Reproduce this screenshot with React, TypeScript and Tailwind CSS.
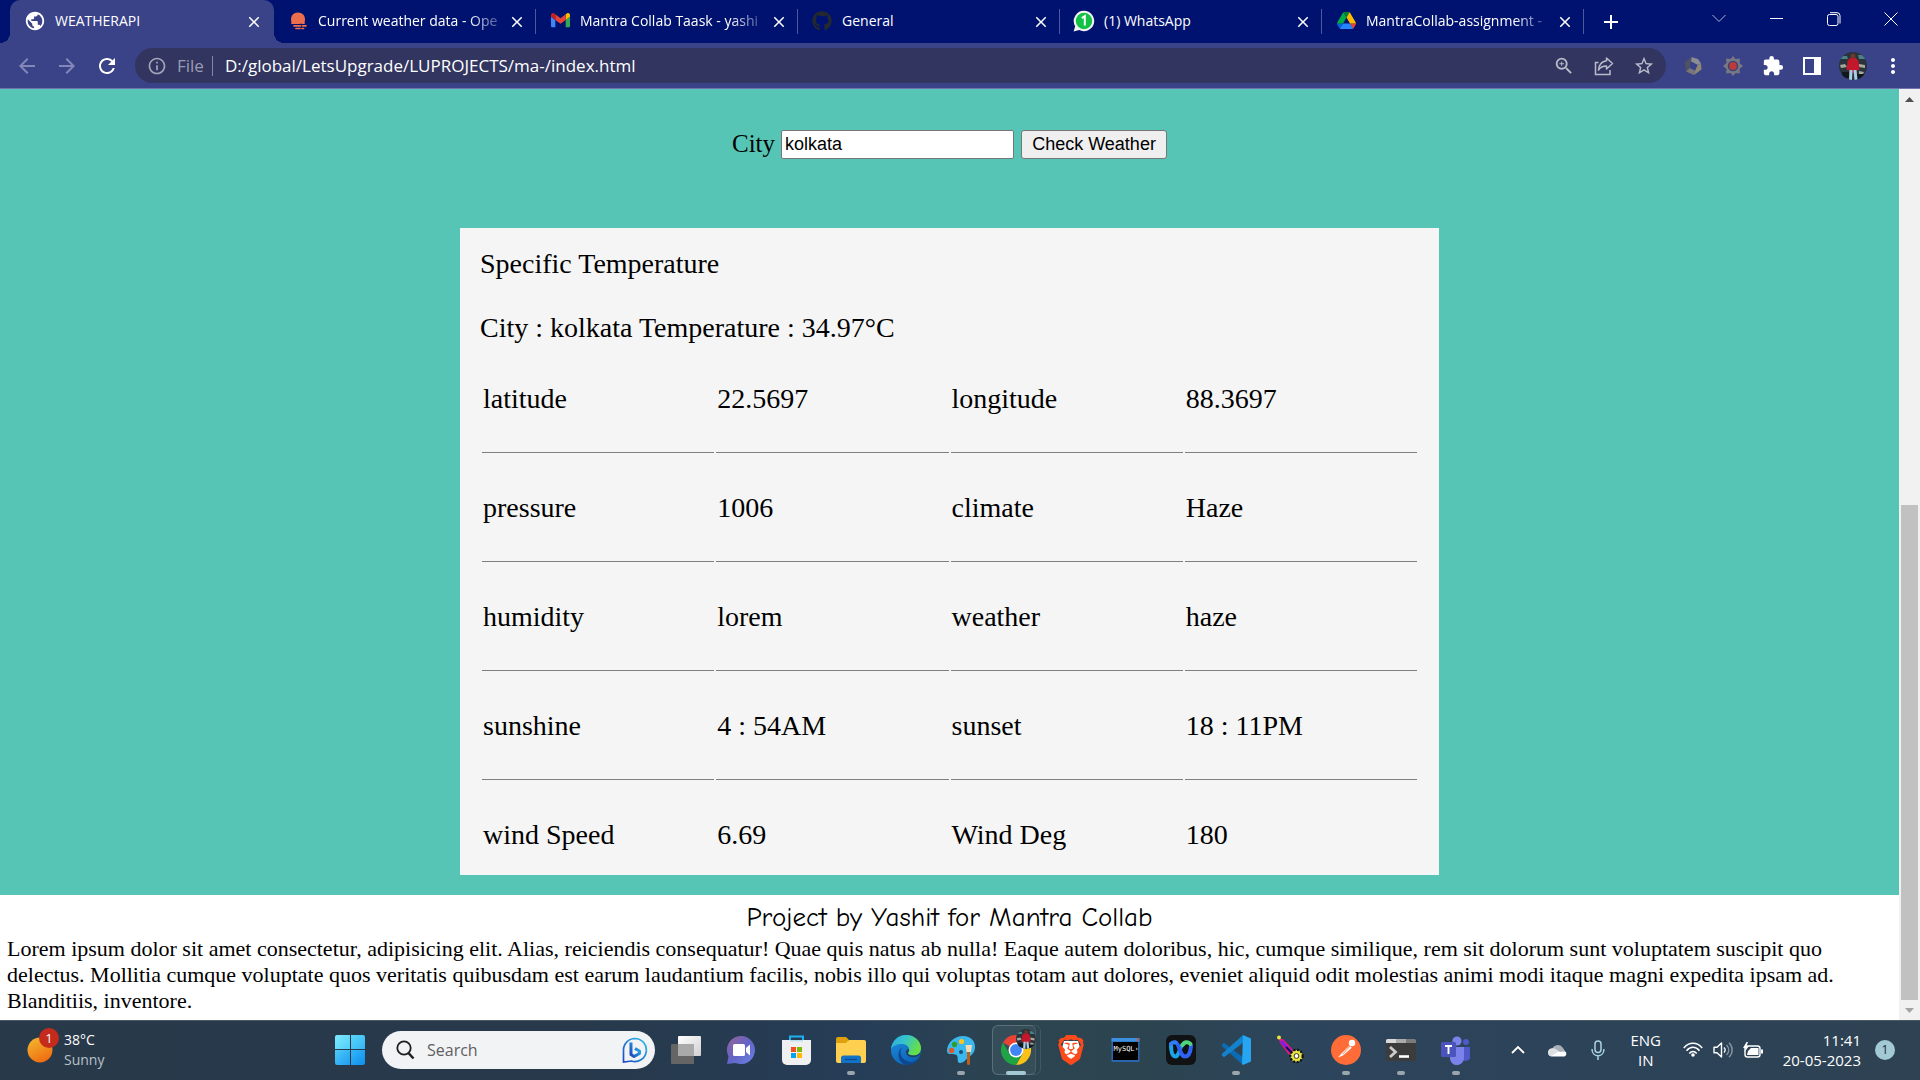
import React, { useState } from "react";
import {
  MdArrowBack,
  MdArrowForward,
  MdRefresh,
  MdInfoOutline,
  MdPublic,
  MdZoomIn,
  MdStarBorder,
  MdExtension,
  MdMoreVert,
  MdClose,
  MdAdd,
} from "react-icons/md";
import { FaGithub } from "react-icons/fa";
import { SiBrave } from "react-icons/si";

/* ---------- tab icons ---------- */

const OpenWeatherIcon = () => (
  <svg viewBox="0 0 20 20" className="size-5">
    <path
      d="M10 1.500c4.400 0 7 3.200 7 7 0 1.600-.3 2.600-.8 3.600H3.800C3.300 11.100 3 10 3 8.500c0-3.800 2.600-7 7-7z"
      fill="#ec6e4c"
    />
    <path d="M4 12.200h8M14 12.200h2M6 14.800h6.500M14.500 14.800h3.500M8 17.500h4M14 17.500h1.500" stroke="#ec6e4c" strokeWidth="1.700" strokeLinecap="round" />
  </svg>
);

const GmailIcon = () => (
  <svg viewBox="52 42 88 66" className="w-[19px]">
    <path fill="#4285f4" d="M58 108h14V74L52 59v43c0 3.32 2.69 6 6 6" />
    <path fill="#34a853" d="M120 108h14c3.32 0 6-2.69 6-6V59l-20 15" />
    <path fill="#fbbc04" d="M120 48v26l20-15v-8c0-7.42-8.47-11.65-14.4-7.2" />
    <path fill="#ea4335" d="M72 74V48l24 18 24-18v26L96 92" />
    <path fill="#c5221f" d="M52 51v8l20 15V48l-5.6-4.2c-5.94-4.45-14.4-.22-14.4 7.2" />
  </svg>
);

const WhatsAppIcon = () => (
  <svg viewBox="0 0 22 22" className="size-[22px]">
    <path d="M11 .800a10.200 10.200 0 1 1-4.800 19.200L.600 21.400 2.200 16.200A10.200 10.200 0 0 1 11 .800z" fill="#f4f4f4" />
    <circle cx="11" cy="11" r="8.200" fill="#12c245" />
    <path d="M8.800 8.200 11.800 6.200v9.400" fill="none" stroke="#fff" strokeWidth="2" />
  </svg>
);

const DriveIcon = () => (
  <svg viewBox="0 0 87.3 78" className="w-[19px]">
    <path fill="#0066da" d="m6.6 66.85 3.85 6.65c.8 1.4 1.95 2.5 3.3 3.3l13.75-23.8h-27.5c0 1.55.4 3.1 1.2 4.5z" />
    <path fill="#00ac47" d="m43.65 25-13.75-23.8c-1.35.8-2.5 1.9-3.3 3.3l-25.4 44a9.06 9.06 0 0 0 -1.2 4.5h27.5z" />
    <path fill="#ea4335" d="m73.55 76.8c1.35-.8 2.5-1.9 3.3-3.3l1.6-2.75 7.65-13.25c.8-1.4 1.2-2.95 1.2-4.5h-27.502l5.852 11.5z" />
    <path fill="#00832d" d="m43.65 25 13.75-23.8c-1.35-.8-2.9-1.2-4.5-1.2h-18.5c-1.6 0-3.15.45-4.5 1.2z" />
    <path fill="#2684fc" d="m59.8 53h-32.3l-13.75 23.8c1.35.8 2.9 1.2 4.5 1.2h50.8c1.6 0 3.15-.45 4.5-1.2z" />
    <path fill="#ffba00" d="m73.4 26.5-12.7-22c-.8-1.4-1.95-2.5-3.3-3.3l-13.75 23.8 16.15 28h27.45c0-1.55-.4-3.1-1.2-4.5z" />
  </svg>
);

const tabs = [
  { title: "WEATHERAPI", icon: <MdPublic className="size-[22px] text-white" /> },
  { title: "Current weather data - Ope", icon: <OpenWeatherIcon />, fade: true },
  { title: "Mantra Collab Taask - yashi", icon: <GmailIcon />, fade: true },
  { title: "General", icon: <FaGithub className="size-5 text-[#24292f]" /> },
  { title: "(1) WhatsApp", icon: <WhatsAppIcon /> },
  { title: "MantraCollab-assignment -", icon: <DriveIcon />, fade: true },
];

function TabStrip() {
  return (
    <div className="flex h-[43px] bg-[#00126f] pl-[10px] text-white">
      <div role="tablist" className="flex min-w-0">
        {tabs.map((tab, i) => (
          <div
            key={tab.title}
            className={
              i === 0
                ? "relative flex w-[264px] items-center rounded-t-[10px] bg-[#3a4288] pl-[14px] pr-[11px]"
                : "relative flex w-[262px] items-center pl-[13px] pr-[10px]"
            }
          >
            {i === 0 && (
              <>
                <span className="absolute bottom-0 -left-[10px] size-[10px] bg-[radial-gradient(circle_at_0_0,#00126f_10px,#3a4288_10px)]" />
                <span className="absolute bottom-0 -right-[10px] size-[10px] bg-[radial-gradient(circle_at_100%_0,#00126f_10px,#3a4288_10px)]" />
              </>
            )}
            <button role="tab" aria-selected={i === 0} className="flex min-w-0 flex-1 items-center gap-[9px] pb-[2px] text-left">
              <span className="flex w-[22px] shrink-0 justify-center">{tab.icon}</span>
              <span
                className={
                  tab.fade
                    ? "whitespace-nowrap text-[14px] leading-5 [mask-image:linear-gradient(to_right,#000_84%,rgb(0_0_0/0.3))]"
                    : "whitespace-nowrap text-[14px] leading-5"
                }
              >
                {tab.title}
              </span>
            </button>
            <button aria-label="Close tab" className="flex w-[18px] justify-center">
              <MdClose className="size-[18px]" />
            </button>
            {i > 0 && <span className="absolute right-0 top-[9px] h-[25px] w-px bg-[#4d5999]" />}
          </div>
        ))}
      </div>
      <button aria-label="New tab" className="ml-[15px] flex items-center">
        <MdAdd className="size-6" />
      </button>
      <div className="ml-auto flex h-[37px]">
        <button aria-label="Search tabs" className="flex w-[57px] items-center justify-center">
          <svg viewBox="0 0 14 9" className="w-[14px]" fill="none" stroke="#aab0d4">
            <path d="m.5 1 6.500 6.500L13.500 1" />
          </svg>
        </button>
        <button aria-label="Minimize" className="flex w-[58px] items-center justify-center">
          <span className="h-px w-[13px] bg-white" />
        </button>
        <button aria-label="Restore" className="flex w-[57px] items-center justify-center">
          <svg viewBox="0 0 14 14" className="size-[14px]" fill="none" stroke="#fff">
            <rect x=".5" y="2.500" width="10.500" height="11" rx="2" />
            <path d="M3 .7h7a3 3 0 0 1 3 3v7.800" />
          </svg>
        </button>
        <button aria-label="Close" className="flex w-[58px] items-center justify-center">
          <svg viewBox="0 0 14 14" className="size-[14px]" fill="none" stroke="#fff">
            <path d="m.5.5 13 13M13.500.5l-13 13" />
          </svg>
        </button>
      </div>
    </div>
  );
}

const Avatar = ({ className }: { className: string }) => (
  <svg viewBox="0 0 28 28" className={className}>
    <defs>
      <clipPath id="avatar-clip">
        <circle cx="14" cy="14" r="14" />
      </clipPath>
    </defs>
    <g clipPath="url(#avatar-clip)">
      <rect width="28" height="28" fill="#28343a" />
      <path d="M0 4h8l1 3H0zM19 3h9v4h-8z" fill="#4d8186" />
      <path d="m1 13 5-1 2 3-6 1zM20 12l6 1v3l-6-1zM20 19l5 1-1 2h-4z" fill="#a9a79b" />
      <path d="M3 20h7v6H3zM18 22h7v5h-7z" fill="#11181c" />
      <path d="M11 6h6l2.500 3 1 9h-3v3h-7v-3h-3l1-9z" fill="#c3182b" />
      <circle cx="14" cy="4" r="2.500" fill="#6b3a2c" />
      <path d="M10.500 18h3L13 28h-3zM14.500 18h3l1 10h-3z" fill="#a8cfe8" />
    </g>
  </svg>
);

function Toolbar() {
  return (
    <div className="flex h-[46px] items-center border-b border-[#6f74ad] bg-[#3a4288] px-[15px] text-white">
      <div className="flex items-center gap-4 text-[#8388b8]">
        <button aria-label="Back">
          <MdArrowBack className="size-6" />
        </button>
        <button aria-label="Forward">
          <MdArrowForward className="size-6" />
        </button>
        <button aria-label="Reload" className="text-white">
          <MdRefresh className="size-6" />
        </button>
      </div>
      <div className="ml-4 flex h-[35px] min-w-0 flex-1 items-center rounded-full bg-[#31355f] pl-3 pr-[11px]">
        <MdInfoOutline className="size-5 shrink-0 text-[#a5a7b8]" />
        <span className="ml-[10px] text-[17px] leading-6 text-[#9a9cb0]">File</span>
        <span className="ml-2 h-5 w-px bg-[#85889f]" />
        <input
          aria-label="Address"
          defaultValue="D:/global/LetsUpgrade/LUPROJECTS/ma-/index.html"
          className="ml-3 h-6 min-w-0 flex-1 bg-transparent text-[17px] leading-6 text-white outline-none"
        />
        <div className="flex items-center gap-[19px] text-[#b9bbc9]">
          <button aria-label="Zoom">
            <MdZoomIn className="size-[22px]" />
          </button>
          <button aria-label="Share">
            <svg viewBox="0 0 20 20" className="size-5" fill="none" stroke="currentColor" strokeWidth="1.500">
              <path d="M4.500 6.500h-3V18.500h14.500V14" />
              <path d="M12.500 2 18.500 7.500l-6 5.500V10c-4 0-6.500 1.500-8 4 .3-4.500 3-8.500 8-9.300z" strokeLinejoin="round" />
            </svg>
          </button>
          <button aria-label="Bookmark">
            <MdStarBorder className="size-[22px]" />
          </button>
        </div>
      </div>
      <div className="ml-4 flex items-center">
        <button aria-label="Extension" className="flex w-10 pl-px">
          <svg viewBox="0 0 20 20" className="size-5">
            <path d="M8.500 1 15 3l3 4.500-3.500 1.500L8 5.500z" fill="#8b8d94" />
            <path d="m18 7.500.500 6L11 19l1-4.500 2.500-5.500z" fill="#8d8876" />
            <path d="m11 19-8-3.500L2 6l6.500-5L7 12z" fill="#50535f" />
            <path d="m7 12 5 2.500L11 19l-8-3.500z" fill="#77777b" />
            <path d="m8 5.500 6.500 3.500L12 14.500 7 12z" fill="#3a4288" />
          </svg>
        </button>
        <button aria-label="Extension" className="flex w-10 pl-px">
          <svg viewBox="0 0 20 20" className="size-5">
            <path d="m10 0 2.500 3 4.500-.500-.500 4.500L20 10l-3.500 3 .500 4.500-4.500-.500L10 20l-2.500-3-4.500.500.500-4.500L0 10l3.500-3L3 2.500l4.500.500z" fill="#777883" />
            <circle cx="10" cy="10" r="5.200" fill="#344079" />
            <circle cx="10" cy="10" r="3.900" fill="#bb3a3a" />
          </svg>
        </button>
        <button aria-label="Extensions" className="flex w-[41px]">
          <MdExtension className="size-[22px]" />
        </button>
        <button aria-label="Side panel" className="flex w-9">
          <span className="flex h-[18px] w-[18px] border-2 border-r-[7px] border-white" />
        </button>
        <button aria-label="Profile">
          <Avatar className="size-7" />
        </button>
        <button aria-label="Menu" className="ml-[14px]">
          <MdMoreVert className="size-6" />
        </button>
      </div>
    </div>
  );
}

/* ---------- page ---------- */

const rows = [
  ["latitude", "22.5697", "longitude", "88.3697"],
  ["pressure", "1006", "climate", "Haze"],
  ["humidity", "lorem", "weather", "haze"],
  ["sunshine", "4 : 54AM", "sunset", "18 : 11PM"],
  ["wind Speed", "6.69", "Wind Deg", "180"],
];

function WeatherPage() {
  const [city, setCity] = useState("kolkata");
  return (
    <main className="min-w-0 flex-1 bg-white font-['Liberation_Serif',serif] text-black">
      <section className="bg-[#56c5b5] pb-5 pt-[39px]">
        <form onSubmit={(e) => e.preventDefault()} className="flex h-8 items-center justify-center">
          <label htmlFor="city" className="pb-px text-[25px] leading-8">
            City
          </label>
          <input
            id="city"
            value={city}
            onChange={(e) => setCity(e.target.value)}
            className="ml-[6px] h-[29px] w-[233px] rounded-[2px] border border-[#767676] bg-white px-[3px] font-['Liberation_Sans',sans-serif] text-[18px]"
          />
          <button className="ml-[7px] h-[29px] w-[146px] rounded-[3px] border border-[#767676] bg-[#efefef] font-['Liberation_Sans',sans-serif] text-[18px] leading-5">
            Check Weather
          </button>
        </form>
        <div className="mx-auto mt-[68px] w-full max-w-[979px] bg-[#f5f5f5] px-5 pb-[22px] pt-5 text-[28px] leading-8">
          <h1>Specific Temperature</h1>
          <p className="mt-8">City : kolkata Temperature : 34.97°C</p>
          <table className="w-full table-fixed border-separate border-spacing-[2px]">
            <tbody>
              {rows.map((row, i) => (
                <tr key={row[0]}>
                  {row.map((cell) => (
                    <td
                      key={cell}
                      className={
                        i < rows.length - 1 ? "border-b border-[#808080] px-px py-[37px]" : "px-px pt-[37px]"
                      }
                    >
                      {cell}
                    </td>
                  ))}
                </tr>
              ))}
            </tbody>
          </table>
        </div>
      </section>
      <footer className="px-[7px] pb-[5px] pt-[5px]">
        <p className="text-center font-['Comic_Sans_MS','Comic_Neue',cursive] text-[27px] leading-9">
          Project by Yashit for Mantra Collab
        </p>
        <p className="text-[22px] leading-[26px]">
          Lorem ipsum dolor sit amet consectetur, adipisicing elit. Alias, reiciendis consequatur! Quae quis natus ab
          nulla! Eaque autem doloribus, hic, cumque similique, rem sit dolorum sunt voluptatem suscipit quo delectus.
          Mollitia cumque voluptate quos veritatis quibusdam est earum laudantium facilis, nobis illo qui voluptas totam
          aut dolores, eveniet aliquid odit molestias animi modi itaque magni expedita ipsam ad. Blanditiis, inventore.
        </p>
      </footer>
    </main>
  );
}

function Scrollbar() {
  return (
    <div className="flex w-[21px] shrink-0 flex-col items-center bg-[#f1f1f1]">
      <button aria-label="Scroll up" className="flex h-[21px] items-center">
        <svg viewBox="0 0 9 5" className="w-[9px]" fill="#505050">
          <path d="M0 5 4.500 0 9 5z" />
        </svg>
      </button>
      <div className="w-full grow-[395]" />
      <div className="w-[17px] grow-[495] bg-[#c1c1c1]" />
      <button aria-label="Scroll down" className="flex h-5 items-center">
        <svg viewBox="0 0 9 5" className="w-[9px]" fill="#a3a3a3">
          <path d="M0 0 4.500 5 9 0z" />
        </svg>
      </button>
    </div>
  );
}

/* ---------- taskbar ---------- */

const TaskView = () => (
  <svg viewBox="0 0 30 30" className="size-[30px]">
    <defs>
      <linearGradient id="tv-front" x1="0" y1="0" x2="1" y2="1">
        <stop offset="0" stopColor="#fff" />
        <stop offset="1" stopColor="#d0d0d0" />
      </linearGradient>
    </defs>
    <rect x="0" y="9" width="23" height="20" rx="1" fill="#656565" />
    <rect x="7" y="1" width="23" height="20" rx="1" fill="url(#tv-front)" />
    <path d="M7 9h16v12H8a1 1 0 0 1-1-1z" fill="#a9a9a9" />
  </svg>
);

const Chat = () => (
  <svg viewBox="0 0 30 30" className="size-[30px]">
    <defs>
      <linearGradient id="chat-bg" x1="0" y1="0" x2="1" y2="1">
        <stop offset="0" stopColor="#9a6396" />
        <stop offset=".5" stopColor="#6264c7" />
        <stop offset="1" stopColor="#6b83e6" />
      </linearGradient>
    </defs>
    <path d="M15 1a14 14 0 1 1-5.500 26.900L1 29l1.500-7.500A14 14 0 0 1 15 1z" fill="url(#chat-bg)" />
    <rect x="7" y="9" width="12" height="12" rx="1.500" fill="#fff" />
    <path d="m20 13 4-3.500v11L20 17z" fill="#fff" />
  </svg>
);

const Store = () => (
  <svg viewBox="0 0 30 30" className="size-[30px]">
    <path d="M9 6V1.500h13V6" fill="none" stroke="#1fb0ef" strokeWidth="2" />
    <path d="M1 5h29v20a5 5 0 0 1-5 5H6a5 5 0 0 1-5-5z" fill="#f0f0f0" />
    <path d="M9 5h13v1.500H9z" fill="#1fb0ef" opacity=".25" />
    <path d="M10 12h5v5h-5z" fill="#f25022" />
    <path d="M16 12h5v5h-5z" fill="#7fba00" />
    <path d="M10 18h5v5h-5z" fill="#00a4ef" />
    <path d="M16 18h5v5h-5z" fill="#ffb900" />
  </svg>
);

const Explorer = () => (
  <svg viewBox="0 0 30 30" className="size-[30px]">
    <path d="M0 4a2 2 0 0 1 2-2h8l3 3-3 5H0z" fill="#dea10b" />
    <path d="M0 8h10l3-3h15a2 2 0 0 1 2 2v19a2 2 0 0 1-2 2H2a2 2 0 0 1-2-2z" fill="#ffd050" />
    <path d="M5 28v-5a2.500 2.500 0 0 1 2.500-2.500h15A2.500 2.500 0 0 1 25 23v5z" fill="#1272c8" />
    <path d="M9 24.500h12" stroke="#0b4a90" strokeWidth="1.300" />
  </svg>
);

const Edge = () => (
  <svg viewBox="0 0 30 30" className="size-[30px]">
    <defs>
      <linearGradient id="edge-a" x1="0" y1="0" x2="1" y2=".4">
        <stop offset="0" stopColor="#2aa8e8" />
        <stop offset=".5" stopColor="#36c4c8" />
        <stop offset="1" stopColor="#66e046" />
      </linearGradient>
      <linearGradient id="edge-b" x1="0" y1="0" x2=".6" y2="1">
        <stop offset="0" stopColor="#1f8fe0" />
        <stop offset="1" stopColor="#0b62b8" />
      </linearGradient>
    </defs>
    <circle cx="15" cy="15" r="15" fill="url(#edge-b)" />
    <path d="M0 14C1 6 7 0 15 0c9 0 15 6.500 15 13 0 5-3.500 7.500-7.500 7.500-3.500 0-5.500-1.200-5.500-2.500 0-.8 1.200-1.200 1.200-3.500 0-3-3-5.500-7-5.500C6 9 1.500 11 0 14z" fill="url(#edge-a)" />
    <path d="M12 12c-4 3-3.500 11 4 14 5 2 9 .500 12-3-3 6-8 7-13 7-4-1-8-5.500-7.500-11 .3-3.500 2-6 4.500-7z" fill="#10488f" />
    <path d="M28.500 20c-2 1.500-4 2.200-6.500 2.200-4 0-7-2-7-5.200 0-1.500.8-2.500 1.800-3 .9.300 1.400.8 1.400 1.500 0 1-1.200 1.500-1.200 2.500 0 1.300 2 2.500 5.500 2.500 3 0 5.500-1.300 7-3z" fill="#25405a" />
  </svg>
);

const Paint = () => (
  <svg viewBox="0 0 30 30" className="size-[30px]">
    <path d="M17 1c7 0 12 4 12 11 0 5-3 8-6 10s-5 6-9 6c-4 0-1-6-3.500-8S1 21 1 16C1 8 8 1 17 1z" fill="#3ab8ee" />
    <circle cx="5.500" cy="15.500" r="2.700" fill="#e0562b" />
    <circle cx="8.500" cy="9.500" r="2.700" fill="#2f9e2f" />
    <circle cx="15.500" cy="6.500" r="2.600" fill="#fcc41c" />
    <circle cx="15" cy="17" r="2" fill="#1d4e73" />
    <path d="M21 17h3v11.500a1.500 1.500 0 0 1-3 0z" fill="#b9601b" />
    <path d="M19.500 10h6.500l-1 7h-4.500z" fill="#eed9b8" />
  </svg>
);

const Chrome = () => (
  <svg viewBox="0 0 48 48" className="size-[30px]">
    <path d="M24 24 3.200 12A24 24 0 0 1 44.800 12z" fill="#ea4335" />
    <path d="M44.800 12A24 24 0 0 1 24 48l10.400-18L24 12z" fill="#fbc116" />
    <path d="M24 48A24 24 0 0 1 3.200 12l10.400 18L34.400 30z" fill="#1ea446" />
    <circle cx="24" cy="24" r="12" fill="#fff" />
    <circle cx="24" cy="24" r="9.500" fill="#4285f4" />
  </svg>
);

const Brave = () => (
  <span className="relative flex size-[30px] items-center justify-center">
    <svg viewBox="0 0 30 30" className="absolute size-[30px]">
      <path d="M8 6h14l2 7-4 9-5 4-5-4-4-9z" fill="#fff" />
    </svg>
    <SiBrave className="relative size-[30px] text-[#fb4a1b]" />
  </span>
);

const MySql = () => (
  <svg viewBox="0 0 30 26" className="w-[30px]">
    <rect x=".5" y="1" width="28" height="24" rx="1" fill="#2a66ad" />
    <path d="M.5 1h28v3.500H.5z" fill="#3d8fe0" />
    <path d="M26 1.500h2v2.500h-2z" fill="#e0512e" />
    <path d="M2 5h25v18H2z" fill="#000" />
    <text x="2.500" y="14" fontSize="7" fill="#fff" fontFamily="DejaVu Sans Mono, monospace">
      MySQL›
    </text>
  </svg>
);

const Webex = () => (
  <svg viewBox="0 0 30 30" className="size-[30px]" fill="none" strokeWidth="4" strokeLinecap="round">
    <rect width="30" height="30" rx="6" fill="#101214" />
    <path d="M5 9c0 8 1.500 12.500 4.500 12.500 4 0 4-11 8-12.500" stroke="#1ba5e8" />
    <path d="M9.500 7.500c4 0 4 14 9.500 14 3.500 0 5.500-4.500 6-10.500" stroke="#2f61f5" />
    <path d="M5 9c1-1.500 3-2 4.500-1.500" stroke="#2f7cf5" />
    <path d="M16.500 10c2-3.500 6-3.500 8-1" stroke="#4fd57a" />
  </svg>
);

const VsCode = () => (
  <svg viewBox="0 0 30 30" className="size-[30px]">
    <path d="M1 9.500 3 7.800l19 14.400V30L.800 11z" fill="#0a6cb4" />
    <path d="M1 20.500 3 22.200 22 7.800V0L.800 19z" fill="#1483cd" />
    <path d="M22 0l8 3.500v23L22 30l-1-1z" fill="#27a5f0" />
  </svg>
);

const Wand = () => (
  <svg viewBox="0 0 30 30" className="size-[30px]">
    <path d="m3 4 4 0 10 11-4 5L4 8z" fill="#f0147c" />
    <path d="M5 6 16 18" stroke="#7a1ee8" strokeWidth="3" />
    <path d="M10 12l5 5" stroke="#12124a" strokeWidth="2" />
    <circle cx="3" cy="2.500" r="2" fill="#e9e63a" />
    <circle cx="20.500" cy="21" r="6" fill="#e9e63a" stroke="#111" strokeWidth="2.500" strokeDasharray="2 1.500" />
    <circle cx="20.500" cy="21" r="5" fill="#e9e63a" />
    <circle cx="20.500" cy="21" r="2.400" fill="#fff" stroke="#333" />
  </svg>
);

const Postman = () => (
  <svg viewBox="0 0 30 30" className="size-[30px]">
    <circle cx="15" cy="15" r="15" fill="#ff6c37" />
    <circle cx="21" cy="8" r="3.200" fill="#fff" />
    <path d="m18.500 10.500 2.300 2.300L12 20.500l-5 2 2.500-3z" fill="#fff" />
    <path d="m19 11-7 8" stroke="#ff6c37" strokeWidth=".8" />
  </svg>
);

const Terminal = () => (
  <svg viewBox="0 0 30 30" className="size-[30px]">
    <rect y="4" width="30" height="22" rx="1.500" fill="#3c3c3c" />
    <path d="M0 8V5.500A1.500 1.500 0 0 1 1.500 4H10v4z" fill="#d9d9d9" />
    <path d="M10 4h10v4H10z" fill="#ababab" />
    <path d="M20 4h8.500A1.500 1.500 0 0 1 30 5.500V8H20z" fill="#7b7b7b" />
    <path d="m4 12 5.500 5L4 22" fill="none" stroke="#ccc" strokeWidth="2.800" />
    <path d="M13 21.500h10" stroke="#fff" strokeWidth="2.600" />
  </svg>
);

const Teams = () => (
  <svg viewBox="0 0 30 30" className="size-[30px]">
    <circle cx="25" cy="7" r="3" fill="#5059c9" />
    <path d="M20 12h9v9a4 4 0 0 1-8 1.500z" fill="#5059c9" />
    <circle cx="16" cy="6" r="4.600" fill="#7b83eb" />
    <path d="M9 12h14v10a7 7 0 0 1-14 2z" fill="#7b83eb" />
    <rect y="7" width="15" height="15" rx="1.500" fill="#4b53bc" />
    <path d="M4 11h7M7.500 11v8" stroke="#fff" strokeWidth="1.900" />
  </svg>
);

const apps = [
  { name: "Task view", icon: <TaskView /> },
  { name: "Chat", icon: <Chat /> },
  { name: "Microsoft Store", icon: <Store /> },
  { name: "File Explorer", icon: <Explorer />, running: true },
  { name: "Edge", icon: <Edge /> },
  { name: "Paint", icon: <Paint />, running: true },
  { name: "Chrome", icon: <Chrome />, active: true },
  { name: "Brave", icon: <Brave /> },
  { name: "MySQL", icon: <MySql /> },
  { name: "Webex", icon: <Webex /> },
  { name: "Visual Studio Code", icon: <VsCode />, running: true },
  { name: "Magic", icon: <Wand /> },
  { name: "Postman", icon: <Postman />, running: true },
  { name: "Terminal", icon: <Terminal />, running: true },
  { name: "Teams", icon: <Teams />, running: true },
];

function Taskbar() {
  return (
    <div className="flex h-[60px] shrink-0 items-center border-t border-[#4a5963] bg-[linear-gradient(to_right,#28394a_0%,#27394b_30%,#263d57_45%,#2c4550_53%,#2b4450_60%,#2d455c_68%,#2c4359_80%,#2e4253_100%)] pb-[2px] text-white">
      <button className="flex w-[335px] items-center pl-[27px] text-left">
        <span className="relative">
          <svg viewBox="0 0 26 26" className="size-[26px]">
            <defs>
              <linearGradient id="sun" x1=".2" y1="0" x2=".7" y2="1">
                <stop offset="0" stopColor="#f2b62e" />
                <stop offset="1" stopColor="#f0690f" />
              </linearGradient>
            </defs>
            <circle cx="13" cy="13" r="12.500" fill="url(#sun)" />
          </svg>
          <span className="absolute -top-[9px] left-[12px] flex size-5 items-center justify-center rounded-full bg-[#c42b1c] text-[13px] leading-5">
            1
          </span>
        </span>
        <span className="ml-[11px] text-[14px] leading-5">
          38°C
          <br />
          <span className="text-[#b9c1c8]">Sunny</span>
        </span>
      </button>
      <button aria-label="Start" className="grid size-[30px] grid-cols-2 gap-px">
        <span className="rounded-tl-[2px] bg-[linear-gradient(135deg,#7deafd,#52cdf8)]" />
        <span className="rounded-tr-[2px] bg-[linear-gradient(135deg,#5ad6fa,#35b5f5)]" />
        <span className="rounded-bl-[2px] bg-[linear-gradient(135deg,#4ec8f8,#1f9ef2)]" />
        <span className="rounded-br-[2px] bg-[linear-gradient(135deg,#35b5f5,#0c90ef)]" />
      </button>
      <label className="ml-[17px] flex h-[38px] w-[273px] items-center rounded-full bg-[#f2f3f5] pl-[13px] pr-[7px]">
        <svg viewBox="0 0 20 20" className="size-5 shrink-0" fill="none" stroke="#1f1f1f">
          <circle cx="9" cy="8" r="6.700" strokeWidth="1.800" />
          <path d="m13.500 13 5 5.500" strokeWidth="2.500" />
        </svg>
        <input
          aria-label="Search"
          placeholder="Search"
          className="ml-3 min-w-0 flex-1 bg-transparent text-[16px] text-black placeholder-[#5f6062] outline-none"
        />
        <svg viewBox="0 0 26 26" className="size-[26px] shrink-0" fill="none">
          <defs>
            <linearGradient id="bing" x1="1" y1="0" x2="0" y2="1">
              <stop offset="0" stopColor="#2bbdee" />
              <stop offset="1" stopColor="#1b49c0" />
            </linearGradient>
          </defs>
          <path d="M13 1.500a11.500 11.500 0 1 1-3.500 22.500L1.500 25V13A11.500 11.500 0 0 1 13 1.500z" stroke="url(#bing)" strokeWidth="1.700" />
          <path d="M9 5.500v12l3 2 5.500-3v-2.500L13 11.500" stroke="url(#bing)" strokeWidth="3" strokeLinejoin="round" />
        </svg>
      </label>
      <div className="ml-[3px] flex">
        {apps.map((app) => (
          <button
            key={app.name}
            aria-label={app.name}
            className={
              app.active
                ? "relative flex h-[50px] w-[55px] items-center justify-center"
                : "relative flex h-[50px] w-[55px] items-center justify-center"
            }
          >
            {app.active && (
              <>
                <span className="absolute left-1 h-[50px] w-[49px] rounded-md border border-white/10" />
                <span className="absolute left-1 h-[50px] w-11 rounded-md border border-white/10 bg-white/5" />
              </>
            )}
            <span className="relative">{app.icon}</span>
            {app.active && <Avatar className="absolute right-[7px] top-1 size-5" />}
            {app.running && <span className="absolute bottom-0 h-1 w-2 rounded-full bg-[#9aa5ae]" />}
            {app.active && <span className="absolute bottom-0 h-1 w-5 rounded-full bg-[#a3c9d4]" />}
          </button>
        ))}
      </div>
      <div className="ml-auto flex items-center pr-[25px]">
        <button aria-label="Hidden icons">
          <svg viewBox="0 0 14 9" className="w-[14px]" fill="none" stroke="#fff" strokeWidth="1.800">
            <path d="m1 8 6-6 6 6" />
          </svg>
        </button>
        <svg viewBox="0 0 20 14" className="ml-[23px] w-5">
          <path d="M4 7a6 6 0 0 1 11-2l2 3-5 3z" fill="#a9b1b8" />
          <path d="M4.500 13.500a4 4 0 0 1-.500-8c3-.500 5 2 8 3.500l5-.800a3 3 0 0 1-.500 5.300z" fill="#fff" />
          <path d="M0 9.500C0 7 2 5.500 4.500 5.500c2 0 3.500 1 6 3L3 13.200A4 4 0 0 1 0 9.500z" fill="#dde0e3" />
        </svg>
        <svg viewBox="0 0 14 20" className="ml-[23px] w-[14px]" fill="none" stroke="#a9d3dd" strokeWidth="1.500">
          <rect x="4" y="1" width="6" height="11.500" rx="3" />
          <path d="M1 9c0 9 12 9 12 0M7 16v4" />
        </svg>
        <button className="ml-[25px] w-[32px] text-center text-[15px] leading-5">
          ENG
          <br />
          IN
        </button>
        <button aria-label="Network, volume and battery" className="ml-[21px] flex items-center gap-[10px]">
          <svg viewBox="0 0 20 15" className="w-5" fill="none" stroke="#fff" strokeWidth="1.500">
            <path d="M.8 6C6-.3 14-.3 19.200 6M3.500 8.800c3.800-4.600 9.200-4.600 13 0M6.300 11.500c2.200-2.700 5.200-2.700 7.400 0" />
            <circle cx="10" cy="13" r="1.800" fill="#fff" stroke="none" />
          </svg>
          <svg viewBox="0 0 20 18" className="w-5" fill="none" stroke="#fff" strokeWidth="1.400">
            <path d="M1 6.300h3L8.500 2v14L4 11.700H1z" strokeLinejoin="round" />
            <path d="M11 6.500c1.500 1.500 1.500 3.500 0 5" />
            <path d="M13.500 4c3 3 3 7 0 10M16 1.800c4.200 4 4.200 10.400 0 14.400" stroke="#8795a3" />
          </svg>
          <svg viewBox="0 0 20 16" className="w-5">
            <rect x="2" y="4" width="15" height="11" rx="2.500" fill="none" stroke="#fff" strokeWidth="1.400" />
            <path d="M18 7.500h2v4h-2zM4 13l1-4 3-3h7.500v7z" fill="#fff" />
            <path d="M3.500 0 0 6h2.500L1.500 10 6 4H3.500L5 0z" fill="#fff" />
          </svg>
        </button>
        <button className="ml-[20px] text-right text-[15px] leading-5">
          11:41
          <br />
          20-05-2023
        </button>
        <span className="ml-[14px] flex size-5 items-center justify-center rounded-full bg-[#a3c9d4] text-[12px] leading-5 text-[#1b2a33]">
          1
        </span>
      </div>
    </div>
  );
}

export default function App() {
  return (
    <div className="flex min-h-screen flex-col bg-white font-['Segoe_UI','Open_Sans',sans-serif]">
      <TabStrip />
      <Toolbar />
      <div className="flex flex-1">
        <WeatherPage />
        <Scrollbar />
      </div>
      <Taskbar />
    </div>
  );
}
